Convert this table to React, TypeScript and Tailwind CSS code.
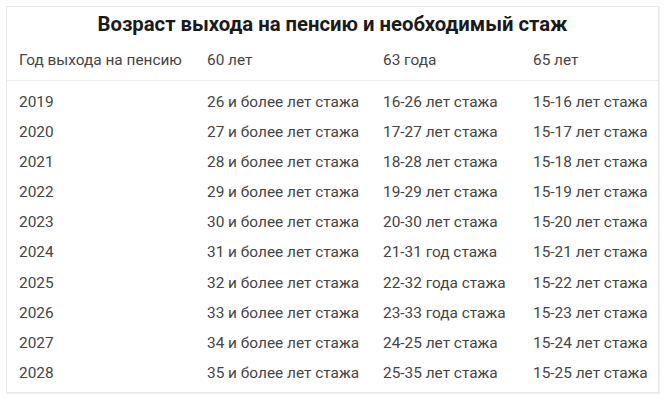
import React from "react";

type Row = {
  year: string;
  a: string;
  b: string;
  c: string;
};

const rows: Row[] = [
  { year: "2019", a: "26 и более лет стажа", b: "16-26 лет стажа", c: "15-16 лет стажа" },
  { year: "2020", a: "27 и более лет стажа", b: "17-27 лет стажа", c: "15-17 лет стажа" },
  { year: "2021", a: "28 и более лет стажа", b: "18-28 лет стажа", c: "15-18 лет стажа" },
  { year: "2022", a: "29 и более лет стажа", b: "19-29 лет стажа", c: "15-19 лет стажа" },
  { year: "2023", a: "30 и более лет стажа", b: "20-30 лет стажа", c: "15-20 лет стажа" },
  { year: "2024", a: "31 и более лет стажа", b: "21-31 год стажа", c: "15-21 лет стажа" },
  { year: "2025", a: "32 и более лет стажа", b: "22-32 года стажа", c: "15-22 лет стажа" },
  { year: "2026", a: "33 и более лет стажа", b: "23-33 года стажа", c: "15-23 лет стажа" },
  { year: "2027", a: "34 и более лет стажа", b: "24-25 лет стажа", c: "15-24 лет стажа" },
  { year: "2028", a: "35 и более лет стажа", b: "25-35 лет стажа", c: "15-25 лет стажа" },
];

const cols = "grid grid-cols-[188px_176px_150px_1fr] pl-3";

const App = () => {
  return (
    <div className="w-[665px] h-[400px] bg-white p-[6px] font-['Roboto',sans-serif]">
      <div className="w-[653px] h-[387px] border border-[#e8e8e8] shadow-[1px_1px_1px_rgba(0,0,0,0.06)]">
        <h1 className="text-center text-[20.3px] font-bold text-[#1a1a1a] leading-[34px]">
          Возраст выхода на пенсию и необходимый стаж
        </h1>

        <div className={`${cols} h-[40px] items-center text-[15.4px] text-[#454545] border-b border-[#ececec]`}>
          <span>Год выхода на пенсию</span>
          <span>60 лет</span>
          <span>63 года</span>
          <span>65 лет</span>
        </div>

        <div className="pt-[6px]">
          {rows.map((r) => (
            <div
              key={r.year}
              className={`${cols} h-[30.2px] items-center text-[15.4px] text-[#454545]`}
            >
              <span>{r.year}</span>
              <span>{r.a}</span>
              <span>{r.b}</span>
              <span>{r.c}</span>
            </div>
          ))}
        </div>
      </div>
    </div>
  );
};

export default App;
